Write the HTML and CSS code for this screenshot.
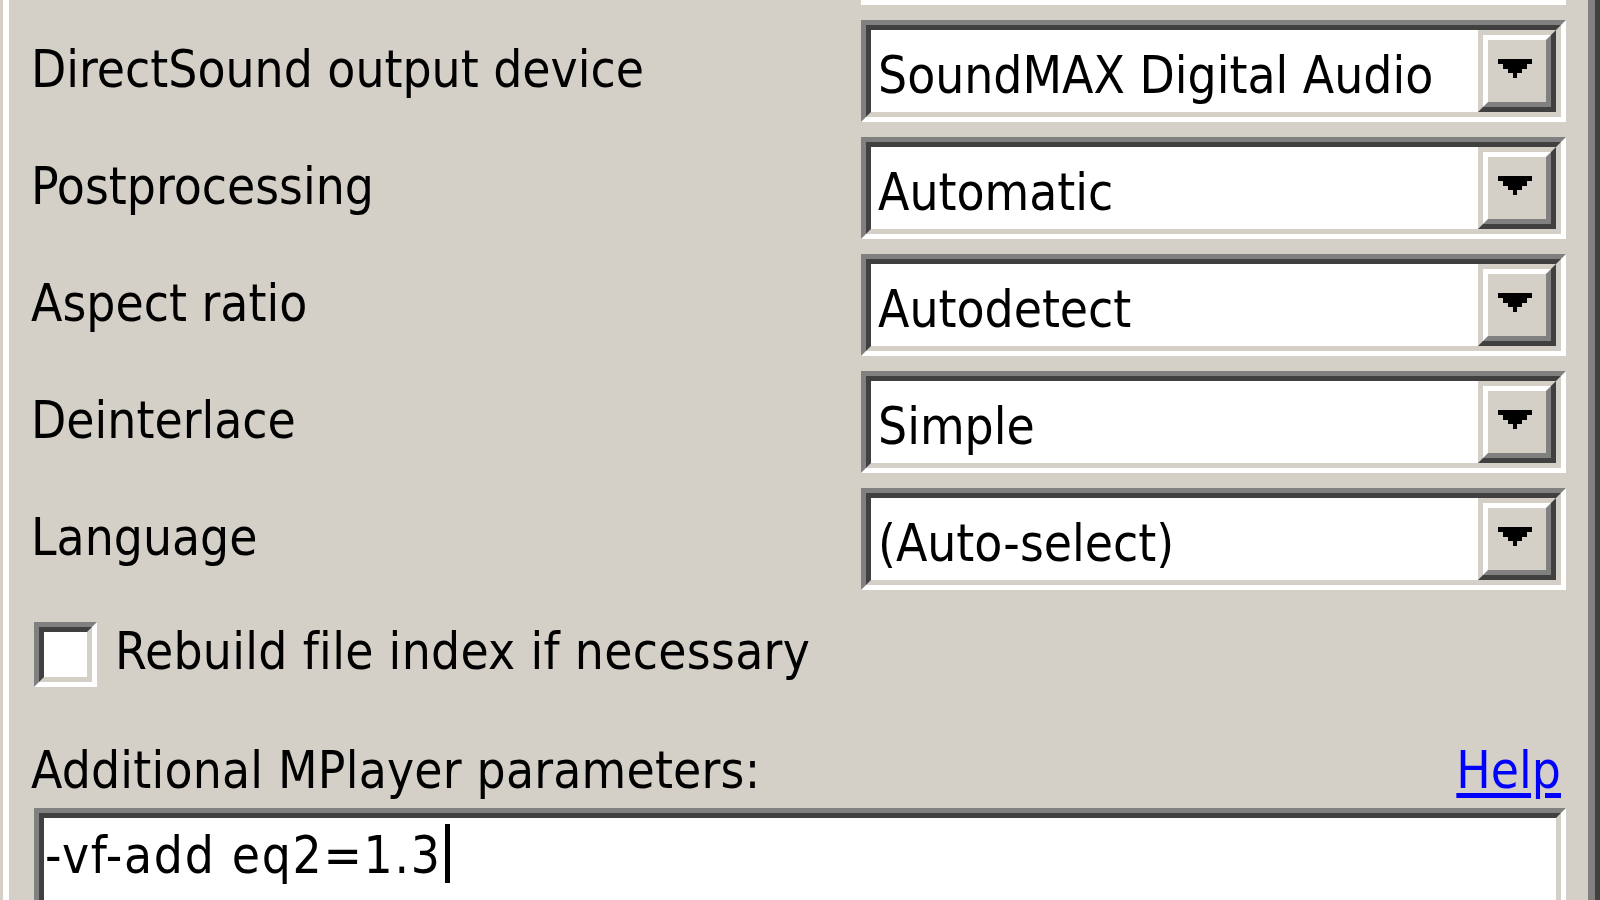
FILE: index.html
```html
<!DOCTYPE html>
<html>
<head>
<meta charset="utf-8">
<link rel="stylesheet" href="styles.css">
</head>
<body>
<div class="tab">
  <div class="form">
    <div></div>
    <div class="prev-edge"></div>

    <div class="label">DirectSound output device</div>
    <div class="combo"><div class="combo-inner"><span class="combo-text">SoundMAX Digital Audio</span><span class="drop"><span class="drop-face"><svg class="arrow" viewBox="0 0 7 4" width="34" height="19" shape-rendering="crispEdges"><polygon points="0,0 7,0 7,1 6,1 6,2 5,2 5,3 4,3 4,4 3,4 3,3 2,3 2,2 1,2 1,1 0,1" fill="#000"/></svg></span></span></div></div>

    <div class="label">Postprocessing</div>
    <div class="combo"><div class="combo-inner"><span class="combo-text">Automatic</span><span class="drop"><span class="drop-face"><svg class="arrow" viewBox="0 0 7 4" width="34" height="19" shape-rendering="crispEdges"><polygon points="0,0 7,0 7,1 6,1 6,2 5,2 5,3 4,3 4,4 3,4 3,3 2,3 2,2 1,2 1,1 0,1" fill="#000"/></svg></span></span></div></div>

    <div class="label">Aspect ratio</div>
    <div class="combo"><div class="combo-inner"><span class="combo-text">Autodetect</span><span class="drop"><span class="drop-face"><svg class="arrow" viewBox="0 0 7 4" width="34" height="19" shape-rendering="crispEdges"><polygon points="0,0 7,0 7,1 6,1 6,2 5,2 5,3 4,3 4,4 3,4 3,3 2,3 2,2 1,2 1,1 0,1" fill="#000"/></svg></span></span></div></div>

    <div class="label">Deinterlace</div>
    <div class="combo"><div class="combo-inner"><span class="combo-text">Simple</span><span class="drop"><span class="drop-face"><svg class="arrow" viewBox="0 0 7 4" width="34" height="19" shape-rendering="crispEdges"><polygon points="0,0 7,0 7,1 6,1 6,2 5,2 5,3 4,3 4,4 3,4 3,3 2,3 2,2 1,2 1,1 0,1" fill="#000"/></svg></span></span></div></div>

    <div class="label">Language</div>
    <div class="combo"><div class="combo-inner"><span class="combo-text">(Auto-select)</span><span class="drop"><span class="drop-face"><svg class="arrow" viewBox="0 0 7 4" width="34" height="19" shape-rendering="crispEdges"><polygon points="0,0 7,0 7,1 6,1 6,2 5,2 5,3 4,3 4,4 3,4 3,3 2,3 2,2 1,2 1,1 0,1" fill="#000"/></svg></span></span></div></div>
  </div>

  <div class="check-row">
    <span class="checkbox"><span class="checkbox-inner"></span></span>
    <span class="check-label">Rebuild file index if necessary</span>
  </div>

  <div class="params-head">
    <span class="params-label">Additional MPlayer parameters:</span>
    <a class="help" href="#">Help</a>
  </div>

  <div class="textbox"><div class="textbox-inner"><span class="textbox-value">-vf-add eq2=1.3</span><span class="caret"></span></div></div>
</div>
</body>
</html>
```

FILE: styles.css
```css
html, body {
  margin: 0;
  padding: 0;
}
body {
  width: 1600px;
  height: 900px;
  overflow: hidden;
  background: #d4d0c8;
  font-family: "DejaVu Sans Condensed", "DejaVu Sans", sans-serif;
  font-stretch: condensed;
  font-size: 51px;
  line-height: 60px;
  color: #000;
}
.tab {
  box-sizing: border-box;
  margin-left: 3px;
  width: 1597px;
  height: 900px;
  border-left: 6px solid #fff;
  padding: 0 34px 0 22px;
  box-shadow: inset -5px 0 0 #404040, inset -12px 0 0 #808080;
}
.form {
  display: grid;
  grid-template-columns: 1fr 705px;
  row-gap: 15px;
}
.prev-edge {
  height: 5px;
  background: #fff;
}
.label {
  padding-top: 20px;
  white-space: nowrap;
}
.combo {
  box-sizing: border-box;
  height: 102px;
  border: 5px solid;
  border-color: #808080 #fff #fff #808080;
}
.combo-inner {
  box-sizing: border-box;
  height: 100%;
  border: 5px solid;
  border-color: #404040 #d4d0c8 #d4d0c8 #404040;
  background: #fff;
  display: flex;
}
.combo-text {
  flex: 1;
  padding: 16px 0 0 7px;
  white-space: nowrap;
  overflow: hidden;
}
.drop {
  box-sizing: border-box;
  width: 78px;
  height: 100%;
  border: 5px solid;
  border-color: #d4d0c8 #404040 #404040 #d4d0c8;
  display: flex;
}
.drop-face {
  flex: 1;
  border: 5px solid;
  border-color: #fff #808080 #808080 #fff;
  background: #d4d0c8;
  display: flex;
  align-items: center;
  justify-content: center;
}
.arrow {
  display: block;
  margin: 0 5px 5px 0;
}
.check-row {
  display: flex;
  align-items: flex-start;
  margin-top: 32px;
}
.checkbox {
  box-sizing: border-box;
  width: 63px;
  height: 65px;
  margin-left: 3px;
  border: 5px solid;
  border-color: #808080 #fff #fff #808080;
  display: flex;
}
.checkbox-inner {
  flex: 1;
  border: 5px solid;
  border-color: #404040 #d4d0c8 #d4d0c8 #404040;
  background: #fff;
}
.check-label {
  margin-left: 18px;
  white-space: nowrap;
  letter-spacing: 0.3px;
}
.params-head {
  display: flex;
  justify-content: space-between;
  margin-top: 54px;
  white-space: nowrap;
}
.params-label {
  letter-spacing: 0.2px;
}
.help {
  color: #0000ff;
  text-decoration: underline;
  text-decoration-thickness: 5px;
  text-underline-offset: 5px;
  margin-right: 5px;
}
.textbox {
  box-sizing: border-box;
  margin: 7px 0 0 3px;
  height: 150px;
  border: 5px solid;
  border-color: #808080 #fff #fff #808080;
}
.textbox-inner {
  box-sizing: border-box;
  height: 100%;
  border: 5px solid;
  border-color: #404040 #d4d0c8 #d4d0c8 #404040;
  background: #fff;
  padding: 6px 0 0 1px;
  white-space: nowrap;
}
.textbox-value {
  letter-spacing: 1.7px;
}
.caret {
  display: inline-block;
  width: 5px;
  height: 59px;
  margin-left: 3px;
  background: #000;
  vertical-align: -10px;
}
```
